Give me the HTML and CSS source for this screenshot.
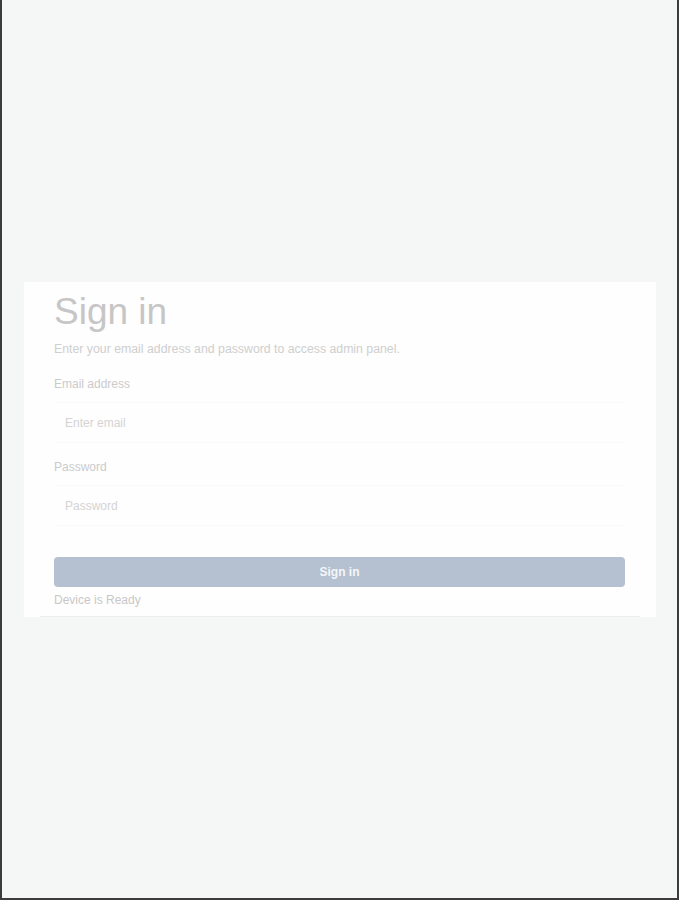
FILE: index.html
```html
<!DOCTYPE html>
<html>
<head>
<meta charset="utf-8">
<link rel="stylesheet" href="styles.css">
</head>
<body>
<div class="frame">
  <div class="card">
    <h1 class="title">Sign in</h1>
    <p class="lead">Enter your email address and password to access admin panel.</p>
    <div class="field">
      <label class="label">Email address</label>
      <div class="input">Enter email</div>
    </div>
    <div class="field">
      <label class="label">Password</label>
      <div class="input">Password</div>
    </div>
    <button class="btn">Sign in</button>
    <div class="status">Device is Ready</div>
    <div class="card-foot"></div>
  </div>
</div>
</body>
</html>
```
FILE: styles.css
```css
html, body {
  margin: 0;
  padding: 0;
}
body {
  font-family: "Liberation Sans", Arial, sans-serif;
  background: #f5f7f7;
}
.frame {
  box-sizing: border-box;
  height: 900px;
  border-left: 2px solid #3c3c3c;
  border-right: 2px solid #3c3c3c;
  border-bottom: 2px solid #3c3c3c;
  background: #f5f7f7;
  display: flex;
  align-items: center;
  justify-content: center;
  padding-left: 1px;
  padding-top: 1px;
}
.card {
  box-sizing: border-box;
  width: 632px;
  background: #fefefe;
  padding: 9px 31px 0 30px;
  display: flex;
  flex-direction: column;
}
.title {
  margin: 0;
  font-weight: 400;
  font-size: 37px;
  line-height: 42px;
  color: #c6c6c6;
}
.lead {
  margin: 8.5px 0 0;
  font-size: 12.3px;
  line-height: 16px;
  color: #cfcfcf;
}
.field {
  display: flex;
  flex-direction: column;
}
.label {
  font-size: 12px;
  line-height: 16px;
  color: #cbcbcb;
}
.field:first-of-type .label {
  margin-top: 19px;
}
.field + .field .label {
  margin-top: 16px;
}
.input {
  margin-top: 10px;
  height: 41px;
  box-sizing: border-box;
  padding: 0 11px;
  display: flex;
  align-items: center;
  font-size: 12px;
  color: #d4d4d4;
  border-top: 1px solid #f9f9f9;
  border-bottom: 1px solid #f9f9f9;
}
.btn {
  margin-top: 31px;
  height: 30px;
  border: none;
  border-radius: 4px;
  background: #b5c0d0;
  color: #f4f6f9;
  font-family: "Liberation Sans", Arial, sans-serif;
  font-weight: 700;
  font-size: 12px;
  padding: 0;
}
.status {
  margin-top: 5px;
  font-size: 12px;
  line-height: 16px;
  color: #c8c8c8;
}
.card-foot {
  margin: 8px -15px 0 -14px;
  height: 1px;
  background: #eceeee;
}
```
